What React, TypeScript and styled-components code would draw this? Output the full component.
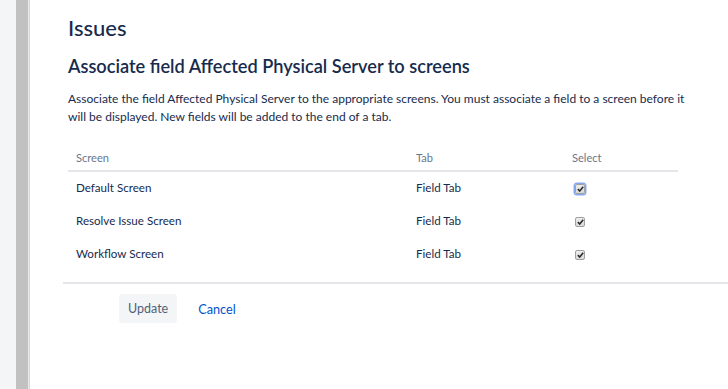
import * as React from "react";
import styled, { createGlobalStyle } from "styled-components";

const GlobalStyle = createGlobalStyle`
  html, body {
    margin: 0;
    padding: 0;
    background: #ffffff;
    font-family: "Lato", "Open Sans", sans-serif;
    color: #172b4d;
  }
`;

const rows = [
  { screen: "Default Screen", tab: "Field Tab", focused: true },
  { screen: "Resolve Issue Screen", tab: "Field Tab", focused: false },
  { screen: "Workflow Screen", tab: "Field Tab", focused: false }
];

const Page = styled.div`
  display: flex;
  height: 389px;
  overflow: hidden;
`;

const Rail = styled.div`
  width: 16px;
  flex-shrink: 0;
  background: #f4f5f7;
`;

const Splitter = styled.div`
  width: 12px;
  flex-shrink: 0;
  background: #c1c1c1;
  border-right: 1px solid #ebebeb;
  box-shadow: 1px 0 0 #d6d6d6;
  margin-right: 1px;
`;

const Main = styled.main`
  flex: 1;
  padding: 14px 0 0 38px;
`;

const Title = styled.h1`
  margin: 0;
  font-size: 22px;
  font-weight: 500;
  line-height: 28px;
  color: #172b4d;
`;

const Subtitle = styled.h2`
  margin: 12px 0 0;
  font-size: 18.2px;
  font-weight: 600;
  line-height: 24px;
  color: #172b4d;
`;

const Description = styled.p`
  margin: 12px 0 0;
  width: 634px;
  font-size: 12px;
  line-height: 18px;
  color: #172b4d;
`;

const Table = styled.div`
  margin-top: 18px;
  width: 610px;
`;

const HeadRow = styled.div`
  display: grid;
  grid-template-columns: 340px 156px 1fr;
  height: 28px;
  align-items: center;
  padding: 0 0 0 8px;
  border-bottom: 2px solid #e4e6ea;
  box-sizing: border-box;
  font-size: 11.1px;
  color: #6b778c;
`;

const Row = styled.div`
  display: grid;
  grid-template-columns: 340px 156px 1fr;
  height: 33px;
  align-items: center;
  padding: 0 0 2px 8px;
  box-sizing: border-box;
  font-size: 11.6px;
  color: #172b4d;
`;

const Box = styled.span<{ $focused: boolean }>`
  display: inline-flex;
  align-items: center;
  justify-content: center;
  width: 10px;
  height: 10px;
  margin-left: 3px;
  margin-top: -6px;
  box-sizing: border-box;
  border: 1px solid #a0a0a0;
  border-radius: 2px;
  background: linear-gradient(#eeeeee, #d9d9d9);
  box-shadow: ${p => (p.$focused ? "0 0 0 1.5px #86a8ee" : "none")};
`;

const Footer = styled.div`
  margin-top: 11px;
  margin-left: -5px;
  width: 619px;
  border-top: 2px solid #e4e6ea;
  padding: 10px 0 0 56px;
  display: flex;
  align-items: center;
  gap: 21px;
`;

const Button = styled.button`
  height: 29px;
  padding: 0 9px;
  border: none;
  border-radius: 3px;
  background: #f4f5f7;
  color: #505f79;
  font-family: inherit;
  font-size: 12.5px;
`;

const LinkButton = styled.a`
  color: #0052cc;
  font-size: 12.7px;
  text-decoration: none;
`;

function Check({ focused }: { focused: boolean }) {
  return (
    <Box $focused={focused}>
      <svg width="7" height="6" viewBox="0 0 7 6">
        <path d="M0.8 3.2 L2.7 5 L6.2 0.8" fill="none" stroke="#2b2b2b" strokeWidth="1.6" />
      </svg>
    </Box>
  );
}

export default function App() {
  return (
    <Page>
      <GlobalStyle />
      <Rail />
      <Splitter />
      <Main>
        <Title>Issues</Title>
        <Subtitle>Associate field Affected Physical Server to screens</Subtitle>
        <Description>
          Associate the field Affected Physical Server to the appropriate screens. You must
          associate a field to a screen before it will be displayed. New fields will be added to
          the end of a tab.
        </Description>
        <Table>
          <HeadRow>
            <span>Screen</span>
            <span>Tab</span>
            <span>Select</span>
          </HeadRow>
          {rows.map(r => (
            <Row key={r.screen}>
              <span>{r.screen}</span>
              <span>{r.tab}</span>
              <span>
                <Check focused={r.focused} />
              </span>
            </Row>
          ))}
        </Table>
        <Footer>
          <Button>Update</Button>
          <LinkButton href="#">Cancel</LinkButton>
        </Footer>
      </Main>
    </Page>
  );
}
